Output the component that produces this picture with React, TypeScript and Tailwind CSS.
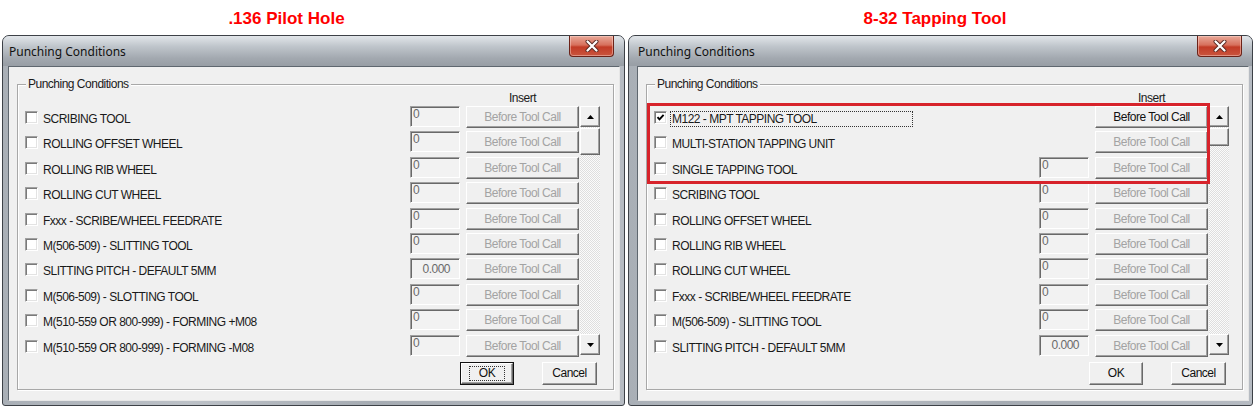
import React from "react";

const NARROW = "font-['Liberation_Sans',Arial,sans-serif] tracking-[-0.5px]";

type RowData = {
  label: string;
  value?: string;
  checked?: boolean;
  focus?: boolean;
  enabled?: boolean;
  decimal?: boolean;
};

const leftRows: RowData[] = [
  { label: "SCRIBING TOOL", value: "0" },
  { label: "ROLLING OFFSET WHEEL", value: "0" },
  { label: "ROLLING RIB WHEEL", value: "0" },
  { label: "ROLLING CUT WHEEL", value: "0" },
  { label: "Fxxx - SCRIBE/WHEEL FEEDRATE", value: "0" },
  { label: "M(506-509) - SLITTING TOOL", value: "0" },
  { label: "SLITTING PITCH - DEFAULT 5MM", value: "0.000", decimal: true },
  { label: "M(506-509) - SLOTTING TOOL", value: "0" },
  { label: "M(510-559 OR 800-999) - FORMING +M08", value: "0" },
  { label: "M(510-559 OR 800-999) - FORMING -M08", value: "0" },
];

const rightRows: RowData[] = [
  { label: "M122 - MPT TAPPING TOOL", checked: true, focus: true, enabled: true },
  { label: "MULTI-STATION TAPPING UNIT" },
  { label: "SINGLE TAPPING TOOL", value: "0" },
  { label: "SCRIBING TOOL", value: "0" },
  { label: "ROLLING OFFSET WHEEL", value: "0" },
  { label: "ROLLING RIB WHEEL", value: "0" },
  { label: "ROLLING CUT WHEEL", value: "0" },
  { label: "Fxxx - SCRIBE/WHEEL FEEDRATE", value: "0" },
  { label: "M(506-509) - SLITTING TOOL", value: "0" },
  { label: "SLITTING PITCH - DEFAULT 5MM", value: "0.000", decimal: true },
];

const RAISED =
  "border border-t-white border-l-white border-b-[#696969] border-r-[#696969] shadow-[inset_-1px_-1px_0_#a0a0a0] bg-[#f0f0f0]";
const SUNKEN =
  "border border-t-[#a0a0a0] border-l-[#a0a0a0] border-b-white border-r-white shadow-[inset_1px_1px_0_#696969] bg-[#f2f2f2]";

function CheckBox({ checked }: { checked?: boolean }) {
  return (
    <div className="mt-[5px] h-[13px] w-[13px] shrink-0 border border-t-[#a0a0a0] border-l-[#a0a0a0] border-b-white border-r-white bg-white shadow-[inset_1px_1px_0_#7a7a7a,inset_-1px_-1px_0_#e3e3e3]">
      {checked && (
        <svg width="11" height="11" viewBox="0 0 11 11" className="block">
          <path d="M2.5 5.2 L4.5 7.4 L8.6 2.8" stroke="#000" strokeWidth="1.9" fill="none" />
        </svg>
      )}
    </div>
  );
}

function Row({ row }: { row: RowData }) {
  return (
    <div className="flex h-[25.4px] items-start">
      <CheckBox checked={row.checked} />
      <div className="w-[372px] shrink-0 pl-[3px]">
        <span
          className={`mt-[4px] inline-block h-[16px] whitespace-nowrap border pl-[1px] pr-[2px] text-[12px] leading-[14px] text-[#1a1a1a] ${
            row.focus ? "w-[243px] border-dotted border-[#333]" : "border-transparent"
          }`}
        >
          {row.label}
        </span>
      </div>
      {row.value !== undefined ? (
        row.decimal ? (
          <div className={`flex h-[21px] w-[50px] shrink-0 items-center justify-end pr-[9px] text-[12px] text-[#6a6a6a] ${SUNKEN}`}>
            {row.value}
          </div>
        ) : (
          <div className={`h-[21px] w-[50px] shrink-0 pl-[2px] pt-[1px] text-[12px] leading-[12px] text-[#6a6a6a] ${SUNKEN}`}>
            {row.value}
          </div>
        )
      ) : (
        <div className="w-[50px] shrink-0" />
      )}
      <div
        className={`ml-[6px] flex h-[22px] w-[113px] shrink-0 items-center justify-center text-[12px] ${RAISED} ${
          row.enabled ? "text-[#111]" : "text-[#a3a3a3]"
        }`}
      >
        Before Tool Call
      </div>
    </div>
  );
}

function Arrow({ up }: { up?: boolean }) {
  return (
    <svg width="7" height="4" viewBox="0 0 7 4">
      {up ? <path d="M0 4 L3.5 0 L7 4 Z" fill="#000" /> : <path d="M0 0 L3.5 4 L7 0 Z" fill="#000" />}
    </svg>
  );
}

function ScrollBar({ thumb }: { thumb: number }) {
  return (
    <div className="flex h-[249px] w-[20px] flex-col">
      <div className={`flex h-[21px] items-center justify-center ${RAISED}`}>
        <Arrow up />
      </div>
      <div className="flex-1 bg-[repeating-conic-gradient(#dedede_0_25%,#fbfbfb_0_50%)] bg-[length:2px_2px] pt-[1px]">
        <div className={`w-[20px] ${RAISED}`} style={{ height: thumb }} />
      </div>
      <div className={`flex h-[21px] items-center justify-center ${RAISED}`}>
        <Arrow />
      </div>
    </div>
  );
}

function CloseButton() {
  return (
    <div className="absolute right-[10px] top-0 flex h-[21px] w-[45px] items-center justify-center rounded-b-[4px] border border-t-0 border-[#6b2218] bg-[linear-gradient(180deg,#e9a999_0%,#d7705c_45%,#c23b26_55%,#c9553e_100%)] shadow-[inset_0_0_0_1px_rgba(255,220,210,0.45)]">
      <svg width="14" height="12" viewBox="0 0 14 12">
        <path d="M2.5 1.5 L11.5 10.5 M11.5 1.5 L2.5 10.5" stroke="#5a2a24" strokeWidth="4" strokeLinecap="round" />
        <path d="M2.5 1.5 L11.5 10.5 M11.5 1.5 L2.5 10.5" stroke="#fff" strokeWidth="2.2" strokeLinecap="round" />
      </svg>
    </div>
  );
}

function DialogWindow({
  rows,
  thumb,
  okFocused,
  wide,
  highlight,
}: {
  rows: RowData[];
  thumb: number;
  okFocused?: boolean;
  wide?: boolean;
  highlight?: boolean;
}) {
  return (
    <div
      className={`relative flex h-[371px] flex-col rounded-t-[7px] rounded-b-[3px] border border-[#3d4147] bg-[linear-gradient(90deg,#a9afb6,#bcc1c7_30%,#a5abb2_60%,#b6bbc2)] ${
        wide ? "w-[625px] pl-[8px] pr-[3px]" : "w-[623px] pl-[5px] pr-[4px]"
      }`}
    >
      <div className="absolute inset-x-0 top-0 h-[30px] rounded-t-[6px] bg-[linear-gradient(180deg,#e2e6ea_0%,#bfc5cb_35%,#a2a8af_75%,#989ea5_100%)]" />
      <div className="relative flex h-[30px] items-center pl-[1px] pt-[1px]">
        <span className="font-['Noto_Sans',sans-serif] text-[12px] text-[#111]">Punching Conditions</span>
      </div>
      <CloseButton />
      <div className={`relative mb-[4px] flex-1 border border-[#5f676f] border-b-[#e6e6e6] border-r-[#e6e6e6] bg-[#f0f0f0] ${NARROW}`}>
        <div className="relative ml-[8px] mr-[5px] mt-[17px] border border-[#a8a8a8] pb-[4px] pl-[7px] pr-[13px] pt-[5px] shadow-[inset_1px_1px_0_#ffffff,1px_1px_0_#ffffff]">
          <span className="absolute -top-[9px] left-[8px] bg-[#f0f0f0] px-[2px] text-[12px] leading-[16px] text-[#1a1a1a]">
            Punching Conditions
          </span>
          <div className="flex h-[16px]">
            <div className="w-[441px]" />
            <div className="w-[113px] text-center text-[12px] leading-[16px] text-[#1a1a1a]">Insert</div>
          </div>
          <div className="flex">
            <div className="w-[554px]">
              {rows.map((r, i) => (
                <Row key={i} row={r} />
              ))}
            </div>
            <div className="w-[1px]" />
            <ScrollBar thumb={thumb} />
          </div>
          <div className="mt-[2px] flex h-[23px] justify-end pr-[3px]">
            <div
              className={`flex w-[54px] items-center justify-center text-[12px] text-[#111] ${
                okFocused ? "border border-[#111] bg-[#f0f0f0]" : RAISED
              }`}
            >
              {okFocused ? (
                <div className={`flex h-full w-full items-center justify-center ${RAISED}`}>
                  <span className="border border-dotted border-[#333] px-[9px] leading-[13px]">OK</span>
                </div>
              ) : (
                "OK"
              )}
            </div>
            <div className={`ml-[28px] flex w-[55px] items-center justify-center text-[12px] text-[#111] ${RAISED}`}>
              Cancel
            </div>
          </div>
        </div>
      </div>
      {highlight && (
        <div className="pointer-events-none absolute left-[18px] top-[67px] h-[81px] w-[563px] border-[3px] border-[#d7232b]" />
      )}
    </div>
  );
}

export default function App() {
  return (
    <div className="h-[411px] w-[1254px] overflow-hidden bg-white">
      <div className="flex h-[35px] pt-[9px] font-['Liberation_Sans',Arial,sans-serif] text-[17px] font-bold leading-[20px] text-[#ff0000]">
        <div className="w-[573px] text-center">.136 Pilot Hole</div>
        <div className="ml-[73px] w-[578px] text-center">8-32 Tapping Tool</div>
      </div>
      <div className="flex pl-[2px]">
        <DialogWindow rows={leftRows} thumb={27} okFocused />
        <div className="w-[3px]" />
        <DialogWindow rows={rightRows} thumb={18} wide highlight />
      </div>
    </div>
  );
}
